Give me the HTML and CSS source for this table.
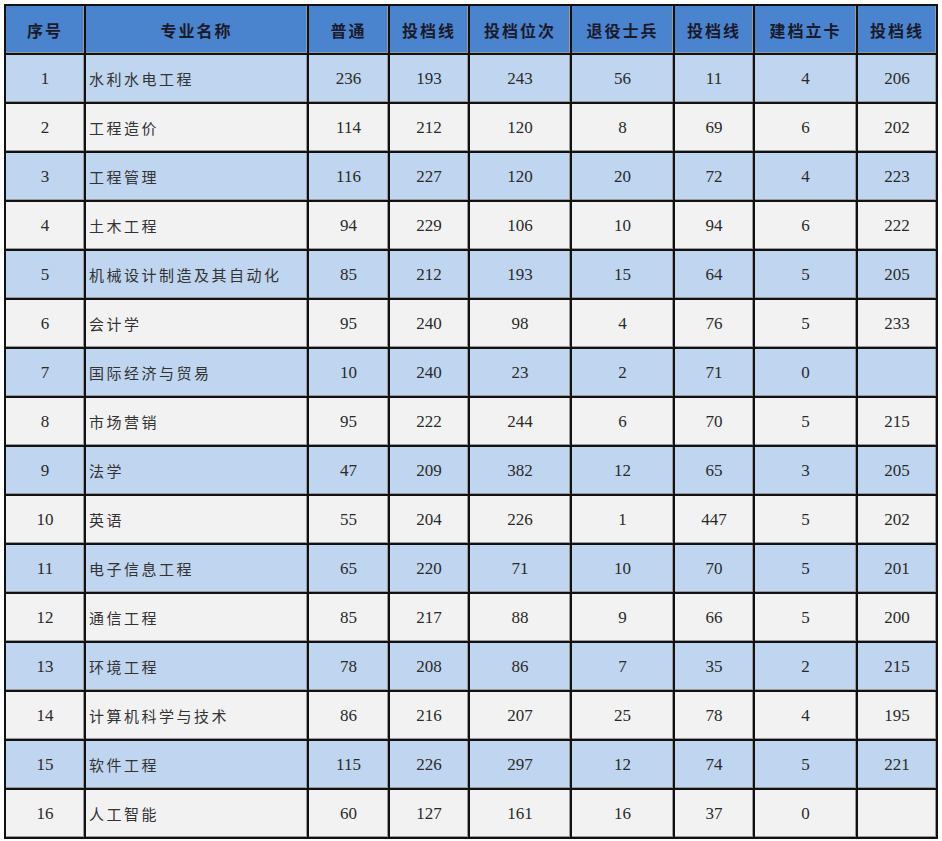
FILE: index.html
```html
<!DOCTYPE html>
<html lang="zh">
<head>
<meta charset="utf-8">
<title>专业投档表</title>
<link rel="stylesheet" href="styles.css">
</head>
<body>
<table class="grid">
  <colgroup>
    <col class="c1"><col class="c2"><col class="c3"><col class="c4"><col class="c5"><col class="c6"><col class="c7"><col class="c8"><col class="c9">
  </colgroup>
  <thead>
    <tr><th>序号</th><th>专业名称</th><th>普通</th><th>投档线</th><th>投档位次</th><th>退役士兵</th><th>投档线</th><th>建档立卡</th><th>投档线</th></tr>
  </thead>
  <tbody>
    <tr><td>1</td><td class="name">水利水电工程</td><td>236</td><td>193</td><td>243</td><td>56</td><td>11</td><td>4</td><td>206</td></tr>
    <tr><td>2</td><td class="name">工程造价</td><td>114</td><td>212</td><td>120</td><td>8</td><td>69</td><td>6</td><td>202</td></tr>
    <tr><td>3</td><td class="name">工程管理</td><td>116</td><td>227</td><td>120</td><td>20</td><td>72</td><td>4</td><td>223</td></tr>
    <tr><td>4</td><td class="name">土木工程</td><td>94</td><td>229</td><td>106</td><td>10</td><td>94</td><td>6</td><td>222</td></tr>
    <tr><td>5</td><td class="name">机械设计制造及其自动化</td><td>85</td><td>212</td><td>193</td><td>15</td><td>64</td><td>5</td><td>205</td></tr>
    <tr><td>6</td><td class="name">会计学</td><td>95</td><td>240</td><td>98</td><td>4</td><td>76</td><td>5</td><td>233</td></tr>
    <tr><td>7</td><td class="name">国际经济与贸易</td><td>10</td><td>240</td><td>23</td><td>2</td><td>71</td><td>0</td><td></td></tr>
    <tr><td>8</td><td class="name">市场营销</td><td>95</td><td>222</td><td>244</td><td>6</td><td>70</td><td>5</td><td>215</td></tr>
    <tr><td>9</td><td class="name">法学</td><td>47</td><td>209</td><td>382</td><td>12</td><td>65</td><td>3</td><td>205</td></tr>
    <tr><td>10</td><td class="name">英语</td><td>55</td><td>204</td><td>226</td><td>1</td><td>447</td><td>5</td><td>202</td></tr>
    <tr><td>11</td><td class="name">电子信息工程</td><td>65</td><td>220</td><td>71</td><td>10</td><td>70</td><td>5</td><td>201</td></tr>
    <tr><td>12</td><td class="name">通信工程</td><td>85</td><td>217</td><td>88</td><td>9</td><td>66</td><td>5</td><td>200</td></tr>
    <tr><td>13</td><td class="name">环境工程</td><td>78</td><td>208</td><td>86</td><td>7</td><td>35</td><td>2</td><td>215</td></tr>
    <tr><td>14</td><td class="name">计算机科学与技术</td><td>86</td><td>216</td><td>207</td><td>25</td><td>78</td><td>4</td><td>195</td></tr>
    <tr><td>15</td><td class="name">软件工程</td><td>115</td><td>226</td><td>297</td><td>12</td><td>74</td><td>5</td><td>221</td></tr>
    <tr><td>16</td><td class="name">人工智能</td><td>60</td><td>127</td><td>161</td><td>16</td><td>37</td><td>0</td><td></td></tr>
  </tbody>
</table>
</body>
</html>
```
FILE: styles.css
```css
html, body {
  margin: 0;
  padding: 0;
  background: #ffffff;
}
body {
  padding: 4px 0 0 4px;
  font-family: "Liberation Serif", "Noto Sans CJK SC", serif;
}
.grid {
  border-collapse: collapse;
  table-layout: fixed;
  width: 932px;
  border: 2px solid #000;
}
.c1 { width: 80px; }
.c2 { width: 223px; }
.c3 { width: 81px; }
.c4 { width: 80px; }
.c5 { width: 102px; }
.c6 { width: 103px; }
.c7 { width: 80px; }
.c8 { width: 103px; }
.c9 { width: 80px; }
.grid th,
.grid td {
  border: 2px solid #111;
  padding: 0;
  text-align: center;
  vertical-align: middle;
  box-shadow: inset -1px -1px 0 #9a9a9a;
}
.grid th {
  height: 47px;
  background: #4a84cf;
  color: #1a1a2a;
  font-family: "Noto Sans CJK SC", sans-serif;
  font-weight: 700;
  font-size: 16px;
  letter-spacing: 2px;
}
.grid td {
  height: 47px;
  font-size: 17px;
  color: #2a2a2a;
}
.grid tbody tr:nth-child(odd) td { background: #c0d5ef; }
.grid tbody tr:nth-child(even) td { background: #f2f2f2; }
.grid td.name {
  text-align: left;
  padding-left: 3px;
  font-family: "Noto Sans CJK SC", sans-serif;
  font-size: 15px;
  letter-spacing: 2.5px;
  color: #333;
}
```
